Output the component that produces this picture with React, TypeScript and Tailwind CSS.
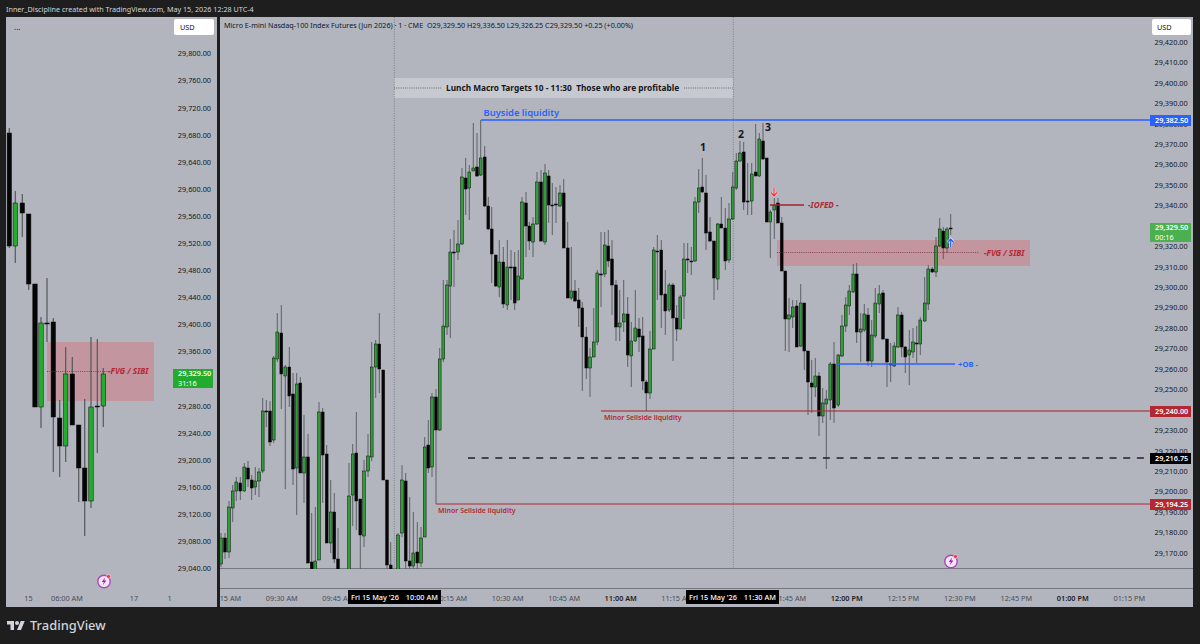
type Candle = [number, number, number, number, number, number];

// x, body top, body bottom, wick high, wick low, 1 = green
const mainCandles: Candle[] = [
  [221, 538, 564, 533, 567, 1], [225, 538, 552, 533, 559, 0], [229, 507, 552, 501, 558, 1],
  [232.7, 491, 508, 485, 522, 1], [236.3, 482, 491, 477, 501, 1], [240.3, 483, 491, 477, 500, 0],
  [244.3, 467, 491, 463, 492, 1], [248, 468, 479, 461, 487, 0], [251.7, 480, 488, 475, 500, 0],
  [255.3, 481, 487, 467, 495, 1], [259, 472, 481, 468, 497, 1], [262.7, 411, 471, 398, 473, 1],
  [266.3, 411, 412, 400, 427, 0], [270, 411, 442, 401, 446, 0], [273.7, 358, 440, 356, 443, 1],
  [277.3, 332, 359, 313, 362, 1], [281.3, 333, 374, 305, 409, 0], [285.3, 367, 376, 365, 489, 1],
  [289.3, 367, 396, 347, 407, 0], [293, 394, 469, 373, 485, 0], [296.7, 384, 468, 373, 515, 1],
  [300.3, 383, 473, 377, 473, 0], [304, 457, 473, 415, 503, 1], [308, 457, 563, 434, 563, 0],
  [311.7, 562, 572, 513, 572, 0], [315.3, 561, 572, 507, 572, 1], [319, 412, 560, 402, 560, 1],
  [322.7, 412, 455, 408, 503, 0], [326.7, 454, 543, 445, 543, 0], [330.7, 512, 543, 480, 553, 1],
  [334.3, 512, 559, 493, 563, 0], [338, 559, 572, 528, 572, 0], [349, 496, 572, 463, 572, 1],
  [352.7, 454, 495, 444, 526, 1], [356.3, 453, 501, 412, 530, 0], [360.3, 499, 535, 499, 572, 0],
  [364, 471, 536, 460, 547, 1], [368, 456, 471, 434, 477, 1], [371.7, 367, 457, 342, 461, 1],
  [375.7, 344, 367, 340, 398, 1], [379.3, 344, 369, 313, 393, 0], [383.3, 370, 480, 370, 480, 0],
  [387, 480, 565, 480, 572, 0], [390.7, 565, 572, 542, 572, 0], [398, 535, 572, 533, 572, 1],
  [402, 480, 533, 465, 537, 1], [405.7, 481, 561, 473, 572, 0], [409.7, 561, 566, 497, 572, 0],
  [413.3, 553, 566, 512, 572, 1], [417.3, 552, 563, 522, 572, 0], [421, 538, 563, 527, 567, 1],
  [424.7, 447, 537, 437, 537, 1], [428.3, 445, 468, 420, 473, 0], [432, 397, 467, 393, 477, 1],
  [436, 397, 430, 389, 504, 0], [439.7, 359, 430, 348, 431, 1], [443.3, 326, 359, 280, 362, 1],
  [447, 285, 327, 280, 335, 1], [450.3, 252, 286, 239, 338, 1], [454, 252, 253, 230, 287, 0],
  [458, 244, 252, 220, 260, 1], [462, 177, 244, 168, 245, 1], [465.7, 178, 189, 158, 215, 0],
  [469.3, 172, 188, 165, 220, 1], [473.3, 168, 171, 123, 170, 1], [477, 167, 176, 133, 177, 0],
  [480.7, 158, 175, 120, 176, 1], [484.7, 157, 206, 146, 207, 0], [488.3, 206, 229, 197, 230, 0],
  [491.7, 229, 254, 207, 283, 0], [495.7, 255, 286, 255, 287, 0], [499.3, 262, 287, 240, 297, 1],
  [503.3, 262, 304, 247, 308, 0], [507.3, 267, 305, 240, 310, 1], [511, 267, 268, 250, 300, 0],
  [514.7, 267, 303, 252, 310, 0], [518.3, 276, 300, 250, 300, 1], [522, 202, 279, 197, 280, 1],
  [526, 203, 226, 192, 257, 0], [529.3, 226, 241, 222, 250, 0], [533, 224, 242, 217, 257, 1],
  [537, 182, 224, 172, 225, 1], [541, 182, 241, 170, 242, 0], [545, 173, 242, 164, 245, 1],
  [548.7, 176, 205, 170, 223, 0], [552.3, 205, 206, 183, 235, 0], [556, 204, 205, 187, 223, 0],
  [560, 193, 206, 185, 207, 1], [563.7, 193, 248, 179, 248, 0], [567.7, 248, 298, 222, 298, 0],
  [571.3, 291, 298, 247, 300, 1], [575, 291, 301, 280, 302, 0], [578.7, 300, 308, 288, 327, 0],
  [582.3, 308, 337, 302, 391, 0], [586.3, 337, 368, 327, 379, 0], [590, 357, 368, 348, 397, 1],
  [593.7, 342, 357, 308, 357, 1], [597.3, 273, 342, 270, 345, 1], [601, 274, 275, 232, 307, 0],
  [604.7, 245, 274, 232, 277, 1], [608.3, 246, 261, 230, 267, 0], [612, 259, 285, 240, 315, 0],
  [616, 285, 327, 280, 341, 0], [619.7, 323, 327, 290, 341, 1], [623.7, 314, 322, 280, 332, 1],
  [627.7, 314, 355, 297, 367, 0], [631.3, 341, 356, 322, 387, 1], [635.3, 328, 341, 290, 342, 1],
  [639, 329, 337, 318, 352, 0], [642.7, 336, 381, 317, 390, 0], [646.3, 382, 393, 380, 411, 0],
  [650, 349, 393, 331, 399, 1], [653.7, 250, 349, 247, 349, 1], [657.3, 251, 252, 235, 300, 0],
  [661.3, 250, 295, 240, 328, 0], [665.3, 294, 311, 270, 335, 0], [669.3, 285, 310, 283, 312, 1],
  [673, 285, 318, 283, 361, 0], [676.7, 318, 329, 305, 341, 0], [680.3, 297, 329, 295, 330, 1],
  [684, 259, 296, 243, 319, 1], [687.7, 259, 260, 243, 273, 0], [691.3, 261, 262, 247, 275, 0],
  [695, 202, 261, 197, 262, 1], [698.7, 188, 202, 169, 213, 1], [702.3, 187, 192, 158, 193, 0],
  [706, 193, 233, 175, 250, 0], [710, 232, 241, 217, 242, 0], [714, 241, 278, 242, 300, 0],
  [717.7, 224, 279, 223, 290, 1], [721.3, 224, 228, 197, 228, 0], [725.3, 228, 261, 208, 270, 0],
  [729, 219, 260, 203, 263, 1], [732.7, 187, 219, 172, 220, 1], [736.3, 161, 188, 153, 190, 1],
  [740, 153, 161, 141, 162, 1], [743.7, 152, 202, 142, 210, 0], [747.7, 201, 202, 163, 215, 0],
  [751.7, 174, 201, 163, 215, 1], [755.7, 172, 176, 124, 176, 0], [759.3, 139, 176, 133, 177, 1],
  [763, 141, 159, 123, 160, 0], [766.7, 158, 222, 158, 222, 0], [770.3, 212, 222, 210, 258, 1],
  [774.3, 205, 210, 198, 239, 1], [778, 203, 223, 198, 223, 0], [781.7, 223, 271, 217, 271, 0],
  [785.3, 271, 319, 271, 351, 0], [789, 315, 319, 298, 352, 1], [792.7, 307, 317, 300, 328, 1],
  [796.7, 306, 347, 300, 347, 0], [800.7, 303, 346, 284, 347, 1], [804.3, 303, 351, 303, 370, 0],
  [808, 351, 382, 351, 415, 0], [811.7, 383, 387, 360, 413, 0], [815.3, 376, 387, 358, 397, 1],
  [819, 376, 416, 372, 436, 0], [822.7, 403, 416, 388, 423, 1], [826.3, 399, 404, 390, 469, 1],
  [830.3, 364, 400, 362, 420, 1], [834, 364, 408, 342, 423, 0], [838.3, 355, 405, 354, 407, 1],
  [842, 326, 356, 315, 357, 1], [845.7, 305, 326, 297, 332, 1], [849.3, 291, 306, 285, 315, 1],
  [853.3, 274, 292, 264, 293, 1], [856.7, 274, 332, 263, 343, 0], [860.7, 329, 332, 313, 362, 1],
  [864.3, 314, 330, 304, 332, 1], [868, 315, 361, 308, 366, 0], [871.7, 335, 361, 320, 367, 1],
  [875.3, 303, 336, 288, 338, 1], [879.3, 294, 304, 285, 313, 1], [883, 293, 339, 290, 340, 0],
  [887, 339, 362, 339, 387, 0], [890.7, 364, 365, 343, 382, 0], [894.3, 346, 366, 342, 367, 1],
  [898, 315, 347, 307, 348, 1], [901.7, 315, 347, 312, 357, 0], [905.3, 347, 357, 346, 373, 0],
  [909.3, 350, 355, 330, 385, 1], [913, 342, 352, 328, 358, 1], [916.7, 343, 344, 326, 363, 0],
  [920.3, 320, 344, 317, 355, 1], [924.7, 303, 321, 277, 322, 1], [928.3, 269, 304, 265, 310, 1],
  [932.3, 269, 272, 267, 273, 0], [936, 246, 272, 237, 277, 1], [939.7, 229, 246, 218, 247, 1],
  [943.3, 231, 248, 227, 259, 0], [947, 229, 248, 227, 253, 1], [950.7, 228, 229, 214, 235, 0],
];

const sideCandles: Candle[] = [
  [9.3, 133, 246, 128, 248, 0], [15.3, 203, 246, 191, 263, 1], [22.3, 203, 213, 194, 237, 0],
  [28.7, 214, 284, 214, 290, 0], [35, 284, 407, 284, 407, 0], [41, 323, 407, 317, 428, 1],
  [47, 323, 324, 278, 342, 0], [53.3, 322, 417, 318, 472, 0], [59.7, 418, 446, 400, 477, 0],
  [65.7, 374, 446, 347, 462, 1], [72.3, 374, 425, 357, 425, 0], [78.7, 425, 468, 425, 502, 0],
  [84.7, 468, 501, 399, 536, 0], [91, 407, 501, 337, 508, 1], [97.3, 406, 407, 339, 453, 0],
  [103.3, 374, 406, 368, 427, 1],
];

const sidePrices = [
  '29,800.00', '29,760.00', '29,720.00', '29,680.00', '29,640.00', '29,600.00', '29,560.00',
  '29,520.00', '29,480.00', '29,440.00', '29,400.00', '29,360.00', '29,320.00', '29,280.00',
  '29,240.00', '29,200.00', '29,160.00', '29,120.00', '29,080.00', '29,040.00',
];

const mainPrices = [
  '29,420.00', '29,410.00', '29,400.00', '29,390.00', '29,380.00', '29,370.00', '29,360.00',
  '29,350.00', '29,340.00', '29,330.00', '29,320.00', '29,310.00', '29,300.00', '29,290.00',
  '29,280.00', '29,270.00', '29,260.00', '29,250.00', '29,240.00', '29,230.00', '29,220.00',
  '29,210.00', '29,200.00', '29,190.00', '29,180.00', '29,170.00',
];

const mainTimes = [
  '09:15 AM', '09:30 AM', '09:45 AM', '10:00 AM', '10:15 AM', '10:30 AM', '10:45 AM', '11:00 AM',
  '11:15 AM', '11:30 AM', '11:45 AM', '12:00 PM', '12:15 PM', '12:30 PM', '12:45 PM', '01:00 PM',
  '01:15 PM',
];

function Candles({ data, body, wick, green }: { data: Candle[]; body: number; wick: number; green: string }) {
  return (
    <>
      {data.map(([x, t, b, h, l, up]) => (
        <g key={x}>
          <line x1={x} x2={x} y1={h} y2={l} stroke="#55575c" strokeWidth={wick} />
          <rect
            x={x - body / 2}
            y={t}
            width={body}
            height={b - t}
            fill={up ? green : '#050505'}
            stroke="#0a0a0a"
            strokeWidth={0.5}
          />
        </g>
      ))}
    </>
  );
}

function Bolt() {
  return (
    <svg width="16" height="16" viewBox="0 0 16 16">
      <circle cx="8" cy="8.5" r="6.2" fill="#f3e5f5" stroke="#ab47bc" strokeWidth="1.4" />
      <path d="M9 4.5 5.8 9h2l-1 3.2L10.4 7.6H8.3z" fill="#9c27b0" />
      <circle cx="12.5" cy="3.5" r="2" fill="#f23645" stroke="#f3e5f5" strokeWidth="0.6" />
    </svg>
  );
}

export default function App() {
  return (
    <div className="flex h-[644px] w-[1200px] flex-col overflow-hidden bg-[#1e1e1e] font-['Noto_Sans',sans-serif]">
      <div className="h-[17px] pl-[6px] text-[7.2px] leading-[18px] text-[#d1d4dc]">
        Inner_Discipline created with TradingView.com, May 15, 2026 12:28 UTC-4
      </div>

      <div className="flex h-[590px] gap-[3px] pl-[6px]">
        {/* small chart */}
        <div className="relative flex w-[211px] flex-col bg-[#b2b5be]">
          <div className="flex h-[572px]">
            <div className="relative w-[167px]">
              <svg width="167" height="572" viewBox="6 17 167 572" className="block">
                <rect x="47" y="342" width="107" height="59" fill="#f23645" fillOpacity="0.25" />
                <Candles data={sideCandles} body={4.4} wick={1.2} green="#22ad2c" />
                <line x1="47" x2="108" y1="371.5" y2="371.5" stroke="#7a2d3a" strokeWidth="0.8" strokeDasharray="1 1.2" />
                <text x="108" y="374" fontSize="8.1" fontWeight="700" fontStyle="italic" fill="#b22833">-FVG / SIBI</text>
              </svg>
              <span className="absolute left-[8px] top-[6px] text-[8px] leading-none text-[#131722]">...</span>
            </div>
            <div className="relative w-[44px] pr-[6px] pt-[23.4px] text-right text-[7.3px] text-[#131722]">
              {sidePrices.map((p) => (
                <div key={p} className="h-[27.1px] leading-[27.1px]">{p}</div>
              ))}
              <div className="absolute left-[1px] top-[2px] h-[16px] w-[40px] rounded-[2px] bg-white pl-[6px] text-left leading-[16px]">USD</div>
              <div className="absolute left-0 top-[352px] h-[19px] w-[40px] bg-[#22ab2f] pl-[5px] text-left font-semibold leading-[9.5px] text-white">
                <div>29,329.50</div>
                <div className="font-normal">31:16</div>
              </div>
            </div>
          </div>
          <div className="flex h-[18px] items-center pt-[1px] text-[7.3px] text-[#4a4d55]">
            <span className="w-[45px] text-center">15</span>
            <span className="w-[29px] whitespace-nowrap text-center">06:00 AM</span>
            <span className="ml-[30px] w-[48px] text-center">17</span>
            <span className="w-[23px] text-center">1</span>
          </div>
          <div className="absolute left-[90px] top-[556px]"><Bolt /></div>
        </div>

        {/* main chart */}
        <div className="relative flex w-[973px] flex-col bg-[#b2b5be]">
          <div className="flex h-[552px] border-b border-[#75787f]">
            <div className="relative w-[930px]">
              <svg width="930" height="552" viewBox="220 17 930 552" className="block">
                <rect x="777" y="240" width="253" height="26" fill="#f23645" fillOpacity="0.25" />
                <rect x="394" y="78" width="339" height="20" fill="#ffffff" fillOpacity="0.28" />
                <line x1="394.3" x2="394.3" y1="17" y2="569" stroke="#6a6d75" strokeWidth="0.8" strokeDasharray="1 1.4" />
                <line x1="733.3" x2="733.3" y1="17" y2="569" stroke="#6a6d75" strokeWidth="0.8" strokeDasharray="1 1.4" />
                <line x1="394" x2="442" y1="88" y2="88" stroke="#4a4d55" strokeWidth="0.8" strokeDasharray="1 1.2" />
                <line x1="684" x2="733" y1="88" y2="88" stroke="#4a4d55" strokeWidth="0.8" strokeDasharray="1 1.2" />

                <Candles data={mainCandles} body={2.8} wick={0.9} green="#2f9e37" />

                <line x1="481" x2="1150" y1="120" y2="120" stroke="#2962ff" strokeWidth="1.6" />
                <line x1="601" x2="1150" y1="411" y2="411" stroke="#b22833" strokeOpacity="0.75" strokeWidth="1.5" />
                <line x1="436" x2="1150" y1="504" y2="504" stroke="#b22833" strokeWidth="1" />
                <line x1="468" x2="1150" y1="458" y2="458" stroke="#1e2025" strokeWidth="1.4" strokeDasharray="7 6.65" />
                <line x1="770" x2="804" y1="205" y2="205" stroke="#a3202c" strokeWidth="1.6" />
                <line x1="837" x2="955" y1="364" y2="364" stroke="#2962ff" strokeWidth="1.6" />
                <line x1="777" x2="979" y1="252.5" y2="252.5" stroke="#7a2d3a" strokeWidth="0.8" strokeDasharray="1 1.2" />

                <path d="M774 196v-8M771 192.5l3 3.5 3-3.5" fill="none" stroke="#ffffff" strokeWidth="2.4" strokeOpacity="0.6" />
                <path d="M774 196v-8M771 192.5l3 3.5 3-3.5" fill="none" stroke="#f23645" strokeWidth="1.2" />
                <path d="M950.7 247v-8M947.7 242.5l3-3.5 3 3.5" fill="none" stroke="#ffffff" strokeWidth="2.6" strokeOpacity="0.8" />
                <path d="M950.7 247v-8M947.7 242.5l3-3.5 3 3.5" fill="none" stroke="#2962ff" strokeWidth="1.3" />

                <text x="446" y="91" fontSize="8.3" fontWeight="700" fill="#131722" xmlSpace="preserve">Lunch Macro Targets 10 - 11:30  Those who are profitable</text>
                <text x="483.5" y="115.5" fontSize="9.4" fontWeight="600" fill="#2962ff">Buyside liquidity</text>
                <text x="700" y="151" fontSize="10.5" fontWeight="700" fill="#131722">1</text>
                <text x="738" y="138" fontSize="10.5" fontWeight="700" fill="#131722">2</text>
                <text x="765" y="131" fontSize="10.5" fontWeight="700" fill="#131722">3</text>
                <text x="808" y="207.5" fontSize="8.1" fontWeight="700" fontStyle="italic" fill="#b22833">-IOFED -</text>
                <text x="984" y="255.5" fontSize="8.1" fontWeight="700" fontStyle="italic" fill="#b22833">-FVG / SIBI</text>
                <text x="958" y="366.5" fontSize="7.7" fontWeight="700" fill="#2962ff">+OB -</text>
                <text x="604" y="419.5" fontSize="7" fontWeight="600" fill="#b22833">Minor Sellside liquidity</text>
                <text x="438" y="512.5" fontSize="7" fontWeight="600" fill="#b22833">Minor Sellside liquidity</text>
              </svg>
              <div className="absolute left-[4px] top-[3px] whitespace-pre text-[7.2px] leading-[10px] text-[#131722]">
                Micro E-mini Nasdaq-100 Index Futures (Jun 2026) · 1 · CME  O29,329.50 H29,336.50 L29,326.25 C29,329.50 +0.25 (+0.00%)
              </div>
            </div>
            <div className="relative w-[43px] pr-[5.3px] pt-[14.8px] text-right text-[7.3px] text-[#131722]">
              {mainPrices.map((p) => (
                <div key={p} className="h-[20.44px] leading-[20.44px]">{p}</div>
              ))}
              <div className="absolute left-[2px] top-[2px] h-[16px] w-[39px] rounded-[2px] bg-white pl-[5px] text-left leading-[16px]">USD</div>
              <div className="absolute left-0 top-[98px] h-[10.5px] w-[41px] bg-[#2962ff] pl-[5px] text-left font-semibold leading-[10.5px] text-white">29,382.50</div>
              <div className="absolute left-0 top-[206px] h-[19px] w-[41px] bg-[#4caf50] pl-[5px] text-left font-semibold leading-[9.5px] text-white">
                <div>29,329.50</div>
                <div className="font-normal">00:16</div>
              </div>
              <div className="absolute left-0 top-[389px] h-[10.5px] w-[41px] bg-[#b22833] pl-[5px] text-left font-semibold leading-[10.5px] text-white">29,240.00</div>
              <div className="absolute left-0 top-[436px] h-[10.5px] w-[41px] bg-black pl-[5px] text-left font-semibold leading-[10.5px] text-white">29,216.75</div>
              <div className="absolute left-0 top-[482px] h-[10.5px] w-[41px] bg-[#b22833] pl-[5px] text-left font-semibold leading-[10.5px] text-white">29,194.25</div>
            </div>
          </div>
          <div className="h-[20px] border-b border-[#75787f]" />
          <div className="flex h-[18px] items-center overflow-hidden pt-[1px] text-[7.3px] text-[#4a4d55]">
            <div className="ml-[-23px] flex">
              {mainTimes.map((t) => (
                <span
                  key={t}
                  className={t.endsWith(':00 AM') || t.endsWith(':00 PM') ? 'w-[56.5px] whitespace-nowrap text-center font-semibold text-[#1e2025]' : 'w-[56.5px] whitespace-nowrap text-center'}
                >
                  {t}
                </span>
              ))}
            </div>
          </div>
          <div className="absolute left-[128px] top-[573px] flex h-[14px] w-[93px] items-center justify-center gap-[7px] whitespace-nowrap bg-black text-[7.3px] font-medium text-white">
            <span>Fri 15 May '26</span><span>10:00 AM</span>
          </div>
          <div className="absolute left-[466px] top-[573px] flex h-[14px] w-[93px] items-center justify-center gap-[7px] whitespace-nowrap bg-black text-[7.3px] font-medium text-white">
            <span>Fri 15 May '26</span><span>11:30 AM</span>
          </div>
          <div className="absolute left-[723px] top-[536px]"><Bolt /></div>
        </div>
      </div>

      <div className="flex h-[37px] items-center gap-[5px] pl-[7px]">
        <svg width="18" height="14" viewBox="0 0 36 28" fill="#d1d4dc">
          <path d="M14 22H7V11H0V4h14v18zM28 22h-8l7.5-18h8L28 22z" />
          <circle cx="20" cy="8" r="4" />
        </svg>
        <span className="text-[12.9px] font-medium leading-none text-[#d1d4dc]">TradingView</span>
      </div>
    </div>
  );
}
